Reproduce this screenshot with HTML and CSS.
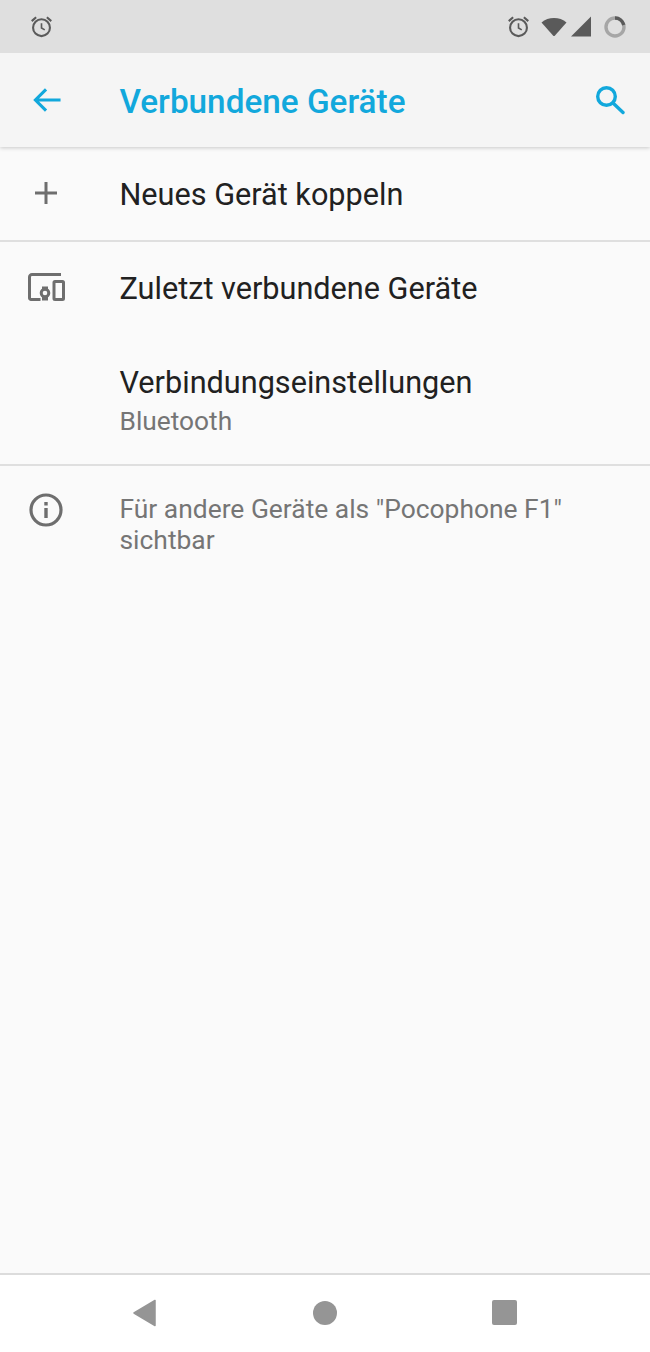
FILE: index.html
```html
<!DOCTYPE html>
<html lang="de">
<head>
<meta charset="utf-8">
<title>Verbundene Geräte</title>
<link rel="stylesheet" href="styles.css">
</head>
<body>
<div class="screen">
  <header class="status">
    <svg class="ic-alarm" viewBox="0 0 24 24"><circle cx="12" cy="13.2" r="8.8" fill="none" stroke="#5a5a5a" stroke-width="2.200"/><path d="M12 8.500v5l3.400 2" fill="none" stroke="#5a5a5a" stroke-width="1.700"/><path d="M1.800 6.400 6.400 2.400M22.200 6.400l-4.600-4" stroke="#5a5a5a" stroke-width="2.200"/></svg>
    <div class="status-right">
      <svg class="ic-alarm" viewBox="0 0 24 24"><circle cx="12" cy="13.2" r="8.8" fill="none" stroke="#5a5a5a" stroke-width="2.200"/><path d="M12 8.500v5l3.400 2" fill="none" stroke="#5a5a5a" stroke-width="1.700"/><path d="M1.800 6.400 6.400 2.400M22.200 6.400l-4.600-4" stroke="#5a5a5a" stroke-width="2.200"/></svg>
      <svg class="ic-wifi" viewBox="0 0 26 20"><path d="M0.500 5.500C4 2.300 8.300 1 13 1s9 1.300 12.500 4.500L14 18.500a1.400 1.400 0 0 1-2 0Z" fill="#5a5a5a"/></svg>
      <svg class="ic-signal" viewBox="0 0 21 21"><path d="M20.500 0.500V20.500H0.500Z" fill="#5a5a5a"/></svg>
      <svg class="ic-battery" viewBox="0 0 22 22"><circle cx="11" cy="11" r="9" fill="none" stroke="#a6a6a6" stroke-width="3.400"/><path d="M11 2a9 9 0 0 1 8.800 7" fill="none" stroke="#5a5a5a" stroke-width="3.400"/></svg>
    </div>
  </header>

  <div class="appbar">
    <svg class="ic-back" viewBox="0 0 30 26"><path d="M28.500 13H3M13.500 2 2.500 13l11 11" fill="none" stroke="#12a8dc" stroke-width="3.200"/></svg>
    <h1 class="title">Verbundene Geräte</h1>
    <svg class="ic-search" viewBox="0 0 30 30"><circle cx="11.500" cy="11.500" r="8.800" fill="none" stroke="#12a8dc" stroke-width="3.400"/><path d="M18 18l10 9.500" stroke="#12a8dc" stroke-width="3.400" stroke-linecap="round"/></svg>
  </div>

  <main class="content">
    <section class="group group-add">
      <div class="row row-add">
        <div class="icon-slot"><svg class="ic-plus" viewBox="0 0 24 24"><path d="M12 1v22M1 12h22" stroke="#6e6e6e" stroke-width="3"/></svg></div>
        <div class="primary">Neues Gerät koppeln</div>
      </div>
    </section>
    <section class="group group-devices">
      <div class="row row-recent">
        <div class="icon-slot"><svg class="ic-devices" viewBox="0 0 37 28"><path d="M33 1.500H4A2.500 2.500 0 0 0 1.500 4v21A1.500 1.500 0 0 0 3 26.500h9.500" fill="none" stroke="#6e6e6e" stroke-width="3"/><rect x="26" y="8.500" width="9.500" height="18" rx="1" fill="none" stroke="#6e6e6e" stroke-width="3"/><circle cx="17" cy="20" r="3.800" fill="none" stroke="#6e6e6e" stroke-width="3"/><path d="M14 13.500h6v3h-6zM14 24h6v3.500h-6z" fill="#6e6e6e"/></svg></div>
        <div class="primary">Zuletzt verbundene Geräte</div>
      </div>
      <div class="row row-settings">
        <div class="icon-slot"></div>
        <div>
          <div class="primary">Verbindungseinstellungen</div>
          <div class="secondary">Bluetooth</div>
        </div>
      </div>
    </section>
    <section class="info">
      <div class="icon-slot"><svg class="ic-info" viewBox="0 0 34 34"><circle cx="17" cy="17" r="15" fill="none" stroke="#6e6e6e" stroke-width="3.200"/><path d="M15.300 15h3.400v10h-3.400zM15.300 9h3.400v3.400h-3.400z" fill="#6e6e6e"/></svg></div>
      <p class="info-text">Für andere Geräte als "Pocophone F1" sichtbar</p>
    </section>
  </main>

  <nav class="navbar">
    <svg class="nav-back" viewBox="0 0 24 28"><path d="M22.500 1.500V26.500L1.500 14Z" fill="#959595" stroke="#959595" stroke-width="1.500" stroke-linejoin="round"/></svg>
    <span class="nav-home"></span>
    <span class="nav-recent"></span>
  </nav>
</div>
</body>
</html>
```

FILE: styles.css
```css
* { box-sizing: border-box; }
html, body { margin: 0; padding: 0; }
body { font-family: Roboto, "Liberation Sans", sans-serif; background: #fafafa; }
.screen { width: 650px; height: 1352px; display: flex; flex-direction: column; overflow: hidden; }

.status { height: 53px; flex: none; background: #dfdfdf; display: flex; align-items: center; justify-content: space-between; padding: 0 24px 0 30px; position: relative; z-index: 2; }
.status-right { display: flex; align-items: center; }
.ic-alarm { width: 23px; height: 23px; display: block; }
.status-right .ic-alarm { margin-right: 11px; margin-left: -2px; }
.ic-wifi { width: 26px; height: 20px; display: block; margin-right: 3px; }
.ic-signal { width: 22px; height: 21px; display: block; margin-right: 12px; }
.ic-battery { width: 22px; height: 22px; display: block; }

.appbar { height: 94px; flex: none; background: #f5f5f5; display: flex; align-items: center; padding: 0 24px 0 33px; box-shadow: 0 1px 4px rgba(0,0,0,.2); position: relative; z-index: 1; }
.ic-back { width: 29px; height: 26px; display: block; flex: none; margin-top: -1px; }
.title { flex: 1; margin: 0 0 0 57.500px; padding-top: 3px; font-size: 33.300px; font-weight: 500; color: #12a8dc; line-height: 36px; }
.ic-search { width: 30px; height: 30px; display: block; flex: none; margin-top: -1px; margin-left: -1px; margin-right: 1px; }

.content { flex: 1; background: #fafafa; }
.group { border-bottom: 2px solid #dfdfdf; }
.group-add { height: 95px; }
.group-devices { height: 224px; }
.row { display: flex; align-items: center; }
.row-add { height: 92px; padding-top: 4px; }
.row-recent { height: 93px; }
.row-settings { height: 128px; padding-top: 3px; }
.icon-slot { width: 119.500px; flex: none; display: flex; justify-content: flex-start; padding-left: 28px; }
.primary { font-size: 30.650px; line-height: 36px; color: #212121; }
.secondary { font-size: 26.300px; line-height: 32px; color: #757575; margin-top: 4px; }

.ic-plus { width: 24px; height: 24px; display: block; margin-left: 6px; margin-top: -5px; }
.ic-devices { width: 37px; height: 28px; display: block; margin-top: -3px; }
.ic-info { width: 34px; height: 34px; display: block; margin-left: 1px; margin-top: -1px; }

.info { display: flex; align-items: flex-start; padding-top: 28px; }
.info-text { margin: 0; width: 470px; font-size: 26.400px; line-height: 31px; color: #757575; }

.navbar { height: 79px; flex: none; background: #fff; border-top: 2px solid #dcdcdc; display: flex; align-items: center; justify-content: space-between; padding: 0 133px 2px 132px; }
.nav-back { width: 25px; height: 28px; display: block; }
.nav-home { width: 24px; height: 24px; border-radius: 50%; background: #959595; display: block; }
.nav-recent { width: 25px; height: 25px; border-radius: 2px; background: #959595; display: block; }
```
